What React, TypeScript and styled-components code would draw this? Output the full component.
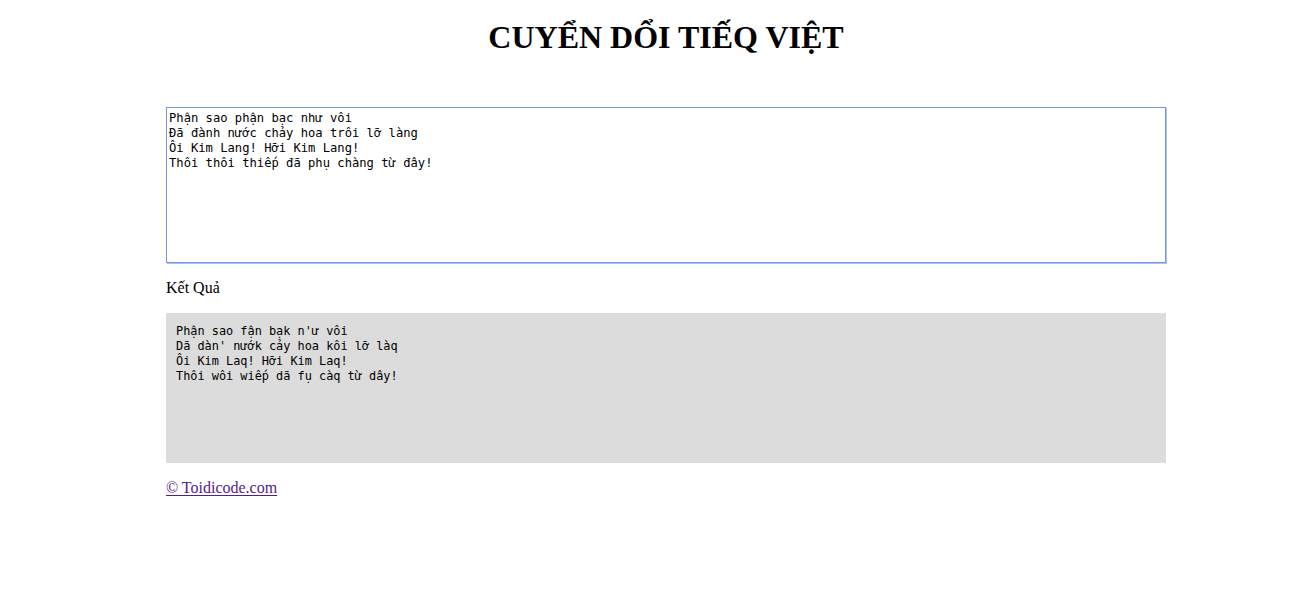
import React, { useState } from "react";
import styled, { createGlobalStyle } from "styled-components";

const GlobalStyle = createGlobalStyle`
  html, body { margin: 0; padding: 0; background: #fff; }
  body { font-family: "Liberation Serif", "Times New Roman", serif; font-size: 16px; color: #000; }
`;

const Page = styled.div`
  padding: 8px 8px 8px 49px;
`;

const Container = styled.main`
  width: 1000px;
  margin: 0 auto;
`;

const Title = styled.h1`
  margin: 11px 0 51px;
  text-align: center;
  font-size: 32px;
  font-weight: bold;
  line-height: 37px;
`;

const Input = styled.textarea`
  display: block;
  box-sizing: border-box;
  width: 1000px;
  height: 156px;
  margin: 0;
  padding: 3px 2px 2px;
  border: 1px solid #7596e2;
  box-shadow: 1px 1px 0 0 #a9c2f3;
  resize: none;
  font-family: "DejaVu Sans Mono", "Liberation Mono", monospace;
  font-size: 12.17px;
  line-height: 15px;
  color: #000;
  background: #fff;
  &:focus { outline: none; }
`;

const Label = styled.p`
  margin: 16px 0;
  line-height: 18px;
`;

const Result = styled.pre`
  box-sizing: border-box;
  margin: 0;
  width: 1000px;
  height: 150px;
  padding: 11px 10px 10px;
  background: #dcdcdc;
  font-family: "DejaVu Sans Mono", "Liberation Mono", monospace;
  font-size: 11.88px;
  line-height: 15px;
  white-space: pre-wrap;
`;

const Footer = styled.p`
  margin: 16px 0;
  line-height: 18px;
`;

const Link = styled.a`
  color: #551a8b;
  text-decoration: underline;
  text-underline-offset: 2px;
`;

const map: Record<string, string> = {
  ngh: "q",
  ng: "q",
  nh: "n'",
  ph: "f",
  th: "w",
  tr: "k",
  ch: "c",
  "đ": "d",
  "Đ": "D",
  c: "k",
};

function convert(s: string): string {
  return s.replace(/ngh|ng|nh|ph|th|tr|ch|đ|Đ|c/g, (m) => map[m] ?? m);
}

const initial =
  "Phận sao phận bạc như vôi\nĐã đành nước chảy hoa trôi lỡ làng\nÔi Kim Lang! Hỡi Kim Lang!\nThôi thôi thiếp đã phụ chàng từ đây!";

export default function App() {
  const [text, setText] = useState(initial);
  return (
    <>
      <GlobalStyle />
      <Page>
        <Container>
          <Title>CUYỂN DỔI TIẾQ VIỆT</Title>
          <Input
            autoFocus
            value={text}
            spellCheck={false}
            onChange={(e) => setText(e.target.value)}
            onFocus={(e) => e.currentTarget.setSelectionRange(0, 0)}
          />
          <Label>Kết Quả</Label>
          <Result>{convert(text)}</Result>
          <Footer>
            <Link href="#">© Toidicode.com</Link>
          </Footer>
        </Container>
      </Page>
    </>
  );
}
